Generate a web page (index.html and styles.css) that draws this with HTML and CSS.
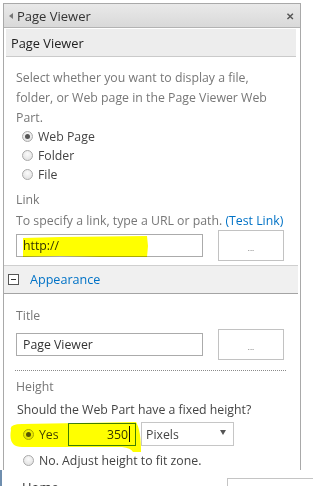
FILE: index.html
```html
<!DOCTYPE html>
<html>
<head>
<meta charset="utf-8">
<title>Page Viewer</title>
<link rel="stylesheet" href="styles.css">
</head>
<body>
<div class="frame">
  <div class="titlebar">
    <span class="arrow"></span>
    <span class="titletext">Page Viewer</span>
    <span class="close">&#x2715;</span>
  </div>
  <div class="section-head">Page Viewer</div>
  <div class="content first">
    <p class="desc">Select whether you want to display a file,<br>folder, or Web page in the Page Viewer Web<br>Part.</p>
    <div class="radios">
      <div class="radio-row"><span class="radio on"></span>Web Page</div>
      <div class="radio-row"><span class="radio"></span>Folder</div>
      <div class="radio-row"><span class="radio"></span>File</div>
    </div>
    <div class="label link-label">Link</div>
    <div class="hint">To specify a link, type a URL or path. <span class="blue">(Test Link)</span></div>
    <div class="field-row">
      <div class="input">http://</div>
      <div class="btn">...</div>
    </div>
  </div>
  <div class="group-head"><span class="minus"></span><span class="group-title">Appearance</span></div>
  <div class="content">
    <div class="label title-label">Title</div>
    <div class="field-row title-row">
      <div class="input">Page Viewer</div>
      <div class="btn">...</div>
    </div>
    <div class="dotted"></div>
    <div class="label height-label">Height</div>
    <div class="question">Should the Web Part have a fixed height?</div>
    <div class="yes-row">
      <span class="radio on"></span><span class="yes">Yes</span>
      <div class="num">350<span class="caret"></span></div>
      <div class="select"><span>Pixels</span><span class="tri"></span></div>
    </div>
    <div class="radio-row no-row"><span class="radio"></span>No. Adjust height to fit zone.</div>
  </div>
</div>
<div class="below">
  <span class="below-text">Home</span>
  <span class="below-box"></span>
</div>
<svg class="marker" width="313" height="486" viewBox="0 0 313 486">
  <path d="M23 238 L60 237 L147 236 L148 246 L147 257 L100 257 L60 256 L23 257 Z" fill="#ffff00"/>
  <path d="M11 430 Q9 424 22 424 L80 423 L136 422 Q141 430 141 452 L133 452 Q131 448 122 447 L22 447 Q8 447 11 430 Z" fill="#ffff00"/>
</svg>
</body>
</html>
```
FILE: styles.css
```css
html, body {
  margin: 0;
  padding: 0;
  background: #ffffff;
  width: 313px;
  height: 486px;
  overflow: hidden;
}
body {
  font-family: "Open Sans", "Noto Sans", sans-serif;
  font-size: 12.3px;
  color: #444;
  position: relative;
}
.frame {
  margin: 3px 0 0 3px;
  width: 296px;
  height: 466px;
  border: 1px solid #a9a9a9;
  border-bottom: none;
  overflow: hidden;
}
.titlebar {
  height: 23px;
  border-bottom: 1px solid #b3b3b3;
  background: linear-gradient(#e9e9e9, #d9d9d9);
  display: flex;
  align-items: center;
  padding-left: 5px;
}
.arrow {
  width: 0;
  height: 0;
  border-top: 3px solid transparent;
  border-bottom: 3px solid transparent;
  border-right: 4px solid #777;
  margin-right: 4px;
}
.titletext {
  font-size: 13px;
  color: #333;
  flex: 1;
}
.close {
  font-size: 10px;
  font-weight: bold;
  color: #555;
  margin-right: 6px;
}
.section-head {
  margin: 1px 4px 0 2px;
  height: 27px;
  background: #ededed;
  border-bottom: 1px solid #cacaca;
  display: flex;
  align-items: center;
  padding-left: 5px;
  font-size: 12.8px;
  color: #222;
}
.content {
  padding-left: 12px;
}
.desc {
  margin: 11px 0 0 0;
  line-height: 20px;
  color: #777;
}
.radios {
  margin-top: -1px;
  padding-left: 6px;
}
.radio-row {
  height: 19px;
  display: flex;
  align-items: center;
  color: #444;
}
.radio {
  box-sizing: border-box;
  width: 11px;
  height: 11px;
  border-radius: 50%;
  border: 1px solid #a9a9a9;
  background: radial-gradient(circle at 50% 35%, #fbfbfb, #dcdcdc);
  margin-right: 5px;
  display: flex;
  align-items: center;
  justify-content: center;
  flex: none;
}
.radio.on::after {
  content: "";
  width: 5px;
  height: 5px;
  border-radius: 50%;
  background: #555;
}
.label {
  height: 19px;
  line-height: 19px;
  color: #777;
}
.link-label {
  margin-top: 6px;
}
.hint {
  margin-top: 2px;
  height: 19px;
  line-height: 19px;
  color: #777;
}
.blue {
  color: #0072c6;
}
.field-row {
  display: flex;
  align-items: center;
  height: 31px;
}
.input {
  box-sizing: border-box;
  width: 187px;
  height: 23px;
  border: 1px solid #ababab;
  padding-left: 6px;
  line-height: 21px;
  color: #333;
}
.btn {
  box-sizing: border-box;
  margin-left: 15px;
  width: 66px;
  height: 31px;
  border: 1px solid #c2c2c2;
  display: flex;
  align-items: center;
  justify-content: center;
  font-size: 8px;
  color: #666;
  padding-top: 3px;
}
.group-head {
  margin: 4px 2px 0 0;
  border-top: 1px solid #cfcfcf;
  border-bottom: 1px solid #a4a4a4;
  height: 27px;
  background: #f0f0f0;
  display: flex;
  align-items: center;
  padding-left: 4px;
}
.minus {
  box-sizing: border-box;
  width: 11px;
  height: 11px;
  border: 1px solid #555;
  background: #fff;
  display: flex;
  align-items: center;
  justify-content: center;
  margin-right: 11px;
}
.minus::after {
  content: "";
  width: 5px;
  height: 1px;
  background: #333;
}
.group-title {
  font-size: 12.6px;
  color: #0072c6;
}
.title-label {
  margin-top: 12px;
}
.title-row {
  margin-top: 4px;
}
.dotted {
  margin: 10px 0 0 -1px;
  width: 271px;
  border-top: 1px dotted #8a8a8a;
}
.height-label {
  margin-top: 6px;
}
.question {
  margin-top: 4px;
  height: 19px;
  line-height: 19px;
  padding-left: 1px;
  color: #444;
}
.yes-row {
  margin-top: 3px;
  height: 24px;
  display: flex;
  align-items: center;
  padding-left: 7px;
}
.yes {
  color: #444;
  width: 29px;
}
.num {
  box-sizing: border-box;
  width: 68px;
  height: 23px;
  border: 1px solid #3f7fd0;
  display: flex;
  align-items: center;
  justify-content: flex-end;
  padding-right: 5px;
  color: #333;
}
.caret {
  width: 1px;
  height: 16px;
  background: #111;
  margin-left: 1px;
}
.select {
  box-sizing: border-box;
  margin-left: 5px;
  width: 93px;
  height: 24px;
  border: 1px solid #c6c6c6;
  display: flex;
  align-items: center;
  justify-content: space-between;
  padding: 0 7px 0 4px;
  color: #444;
}
.tri {
  width: 0;
  height: 0;
  border-left: 3px solid transparent;
  border-right: 3px solid transparent;
  border-top: 5px solid #555;
  margin-top: -3px;
}
.no-row {
  margin-top: 5px;
  padding-left: 7px;
}
.below {
  display: flex;
  height: 16px;
  border-left: 2px solid #6f8eae;
  overflow: hidden;
}
.below-text {
  margin: 9px 0 0 20px;
  font-size: 13px;
  line-height: 16px;
  color: #333;
}
.below-box {
  box-sizing: border-box;
  margin: 8px 0 0 auto;
  width: 86px;
  height: 20px;
  border-top: 1px solid #c4c4c4;
  border-left: 1px solid #c4c4c4;
}
.marker {
  position: absolute;
  left: 0;
  top: 0;
  mix-blend-mode: multiply;
  pointer-events: none;
}
```
